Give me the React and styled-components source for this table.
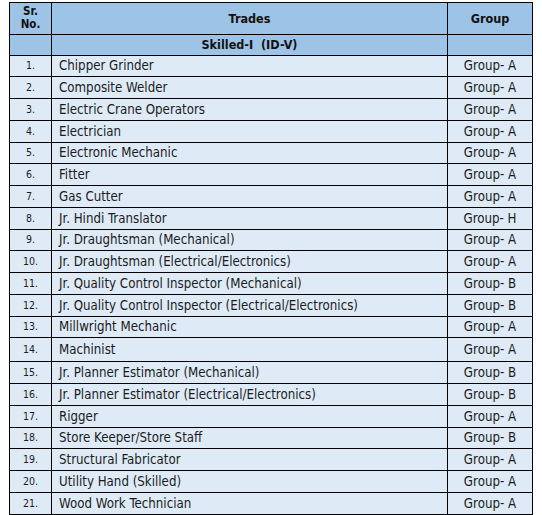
import styled, { createGlobalStyle } from "styled-components";

const GlobalStyle = createGlobalStyle`
  body {
    margin: 0;
    background: #ffffff;
    font-family: "DejaVu Sans Condensed", "DejaVu Sans", sans-serif;
    color: #1c1c1c;
  }
`;

const Page = styled.div`
  padding: 2px 0 0 9px;
`;

const Table = styled.table`
  border-collapse: collapse;
  table-layout: fixed;
  width: 523px;
`;

const HeadCell = styled.th`
  background: #9dc3e6;
  border: 1px solid #000;
  font-weight: bold;
  font-size: ${(props) => (props.small ? "11.5px" : "12.5px")};
  line-height: ${(props) => (props.small ? "13px" : "15px")};
  text-align: center;
  vertical-align: middle;
  padding: 0;
  color: #111;
`;

const Row = styled.tr`
  height: ${(props) => props.h}px;
`;

const Cell = styled.td`
  background: #deeaf6;
  border: 1px solid #000;
  padding: 0;
  vertical-align: middle;
  font-size: 13.2px;
  line-height: 15px;
  white-space: nowrap;
`;

const NumCell = styled(Cell)`
  text-align: center;
  font-size: 10.5px;
`;

const TradeCell = styled(Cell)`
  padding-left: 7px;
`;

const GroupCell = styled(Cell)`
  text-align: center;
`;

const rows = [
  ["Chipper Grinder", "A"],
  ["Composite Welder", "A"],
  ["Electric Crane Operators", "A"],
  ["Electrician", "A"],
  ["Electronic Mechanic", "A"],
  ["Fitter", "A"],
  ["Gas Cutter", "A"],
  ["Jr. Hindi Translator", "H"],
  ["Jr. Draughtsman (Mechanical)", "A"],
  ["Jr. Draughtsman (Electrical/Electronics)", "A"],
  ["Jr. Quality Control Inspector (Mechanical)", "B"],
  ["Jr. Quality Control Inspector (Electrical/Electronics)", "B"],
  ["Millwright Mechanic", "A"],
  ["Machinist", "A"],
  ["Jr. Planner Estimator (Mechanical)", "B"],
  ["Jr. Planner Estimator (Electrical/Electronics)", "B"],
  ["Rigger", "A"],
  ["Store Keeper/Store Staff", "B"],
  ["Structural Fabricator", "A"],
  ["Utility Hand (Skilled)", "A"],
  ["Wood Work Technician", "A"],
];

export default function App() {
  return (
    <Page>
      <GlobalStyle />
      <Table>
        <colgroup>
          <col style={{ width: 42 }} />
          <col style={{ width: 396 }} />
          <col style={{ width: 85 }} />
        </colgroup>
        <thead>
          <Row h={31.5}>
            <HeadCell small>
              Sr.
              <br />
              No.
            </HeadCell>
            <HeadCell>Trades</HeadCell>
            <HeadCell>Group</HeadCell>
          </Row>
          <Row h={21}>
            <HeadCell />
            <HeadCell>Skilled-I&nbsp; (ID-V)</HeadCell>
            <HeadCell />
          </Row>
        </thead>
        <tbody>
          {rows.map(([trade, group], i) => (
            <Row key={trade} h={i === 13 ? 24 : 21.75}>
              <NumCell>{i + 1}.</NumCell>
              <TradeCell>{trade}</TradeCell>
              <GroupCell>Group- {group}</GroupCell>
            </Row>
          ))}
          <Row h={21.75}>
            <HeadCell />
            <HeadCell />
            <HeadCell />
          </Row>
        </tbody>
      </Table>
    </Page>
  );
}
